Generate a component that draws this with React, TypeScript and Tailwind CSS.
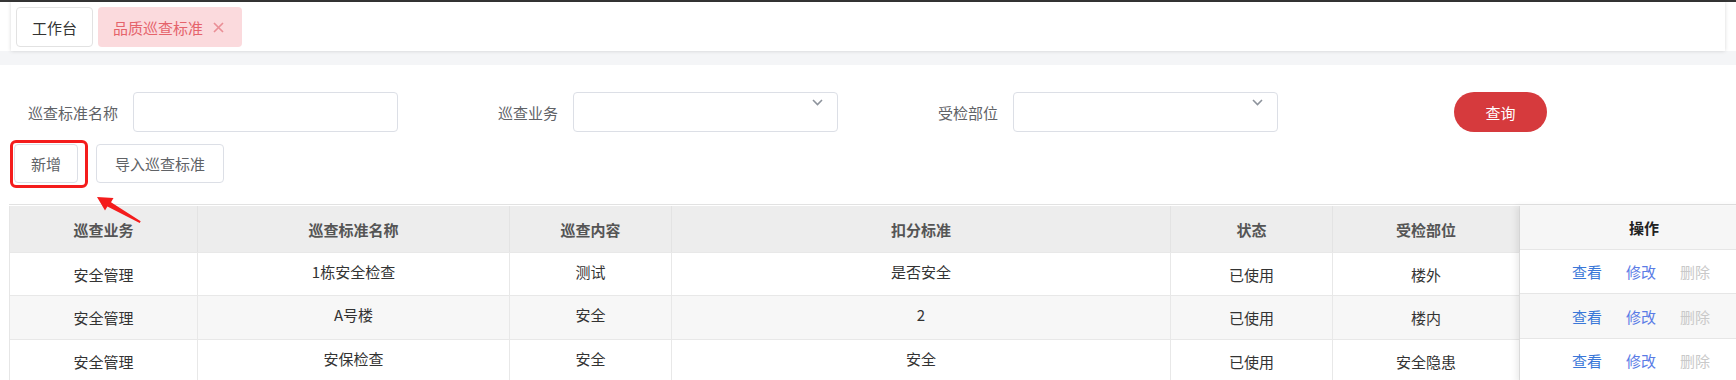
import React from "react";

const Chevron = () => (
  <svg width="11" height="7" viewBox="0 0 11 7" className="absolute right-[14px] top-[6px]">
    <polyline points="1,1 5.5,5.5 10,1" fill="none" stroke="#8d939c" strokeWidth="1.6" />
  </svg>
);

const rows = [
  { biz: "安全管理", name: "1栋安全检查", content: "测试", std: "是否安全", status: "已使用", part: "楼外" },
  { biz: "安全管理", name: "A号楼", content: "安全", std: "2", status: "已使用", part: "楼内" },
  { biz: "安全管理", name: "安保检查", content: "安全", std: "安全", status: "已使用", part: "安全隐患" },
];

const widths = ["w-[188px]", "w-[312px]", "w-[162px]", "w-[499px]", "w-[162px]", "w-[187px]"];
const headers = ["巡查业务", "巡查标准名称", "巡查内容", "扣分标准", "状态", "受检部位"];
const rowH = ["h-[43px]", "h-[44px]", "h-[44px]"];
const fixedRowH = ["h-[44px]", "h-[45px]", "h-[44px]"];

export default function App() {
  return (
    <div className="relative w-[1736px] h-[380px] overflow-hidden bg-white font-['Noto_Sans_CJK_SC',sans-serif] text-[15px]">
      <div className="h-[2px] bg-[#363636]" />
      {/* tab bar */}
      <div className="flex h-[49px] bg-white">
        <div className="w-[11px] bg-white" />
        <div className="relative z-10 flex flex-1 gap-[5px] bg-white pl-[5px] pt-[5px] shadow-[0_0_4px_rgba(0,0,0,0.16)]">
          <div className="flex h-[40px] items-center rounded-[4px] border border-[#e2e2e2] bg-white px-[15px] leading-none text-[#333]">
            工作台
          </div>
          <div className="flex h-[40px] items-center gap-[10px] rounded-[4px] bg-[#fbdadd] pl-[15px] pr-[18px] leading-none text-[#e5636b]">
            <span>品质巡查标准</span>
            <svg width="11" height="11" viewBox="0 0 11 11">
              <path d="M1 1 L10 10 M10 1 L1 10" stroke="#ea8f96" strokeWidth="1.7" fill="none" />
            </svg>
          </div>
        </div>
        <div className="w-[11px] bg-white" />
      </div>
      <div className="h-[14px] bg-[#f4f5f7]" />

      {/* form row */}
      <div className="mt-[27px] flex pl-[13px]">
        {[
          { label: "巡查标准名称", select: false },
          { label: "巡查业务", select: true },
          { label: "受检部位", select: true },
        ].map((f) => (
          <div key={f.label} className="flex w-[440px] shrink-0 items-center">
            <div className="w-[105px] shrink-0 text-right leading-none text-[#606266]">{f.label}</div>
            <div className="relative ml-[15px] h-[40px] w-[265px] shrink-0 rounded-[4px] border border-[#dcdfe6] bg-white">
              {f.select && <Chevron />}
            </div>
          </div>
        ))}
        <div className="flex w-[300px] shrink-0 items-center pl-[121px]">
          <button className="h-[40px] w-[93px] shrink-0 rounded-full bg-[#d63a3d] leading-none text-white">查询</button>
        </div>
      </div>

      {/* action row */}
      <div className="mt-[12px] flex gap-[18px] pl-[14px]">
        <button className="h-[39px] w-[64px] rounded-[4px] border border-[#dcdfe6] bg-white leading-none text-[#606266]">
          新增
        </button>
        <button className="h-[39px] w-[128px] rounded-[4px] border border-[#dcdfe6] bg-white leading-none text-[#606266]">
          导入巡查标准
        </button>
      </div>

      {/* table */}
      <div className="mt-[21px] ml-[9px] flex border-t border-[#e2e2e2] pt-[1px]">
        <div className="shrink-0 border-l border-[#e6e6e6]">
          <div className="flex h-[46px] bg-[#ededed] font-bold text-[#555]">
            {headers.map((h, i) => (
              <div key={h} className={`${widths[i]} flex shrink-0 items-center justify-center border-r border-[#e3e3e3] leading-none`}>
                {h}
              </div>
            ))}
          </div>
          {rows.map((r, ri) => {
            const vals = [r.biz, r.name, r.content, r.std, r.status, r.part];
            return (
              <div
                key={ri}
                className={`flex ${rowH[ri]} border-t border-[#e8e8e8] ${ri === 1 ? "bg-[#f7f7f7]" : "bg-white"} text-[#333]`}
              >
                {vals.map((v, i) => (
                  <div
                    key={i}
                    className={`${widths[i]} flex shrink-0 items-center justify-center border-r border-[#e8e8e8] leading-none ${
                      i >= 1 && i <= 3 ? "pb-[6px]" : ""
                    }`}
                  >
                    {v}
                  </div>
                ))}
              </div>
            );
          })}
        </div>
        <div className="relative z-10 w-[250px] shrink-0 shadow-[-4px_0_6px_rgba(0,0,0,0.07)]">
          <div className="flex h-[43px] items-center bg-[#f6f6f6] pl-[109px] font-bold leading-none text-[#222]">操作</div>
          {fixedRowH.map((h, ri) => (
            <div
              key={ri}
              className={`flex ${h} items-center gap-[24px] border-t border-[#e6e6e6] pl-[52px] leading-none ${
                ri === 1 ? "bg-[#f7f7f7]" : "bg-white"
              }`}
            >
              <span className="text-[#3a77d8]">查看</span>
              <span className="text-[#5b7ce6]">修改</span>
              <span className="text-[#c9c9c9]">删除</span>
            </div>
          ))}
        </div>
      </div>

      {/* annotation */}
      <div className="absolute left-[10px] top-[140px] h-[48px] w-[78px] rounded-[6px] border-[3px] border-[#f41c1c]" />
      <svg className="absolute left-[90px] top-[190px]" width="60" height="40" viewBox="0 0 60 40">
        <polygon
          points="7,7 23.5,8 21,12.2 50.7,31.2 49.7,33 17.4,16.6 15,20.6"
          fill="#f41c1c"
        />
      </svg>
    </div>
  );
}
